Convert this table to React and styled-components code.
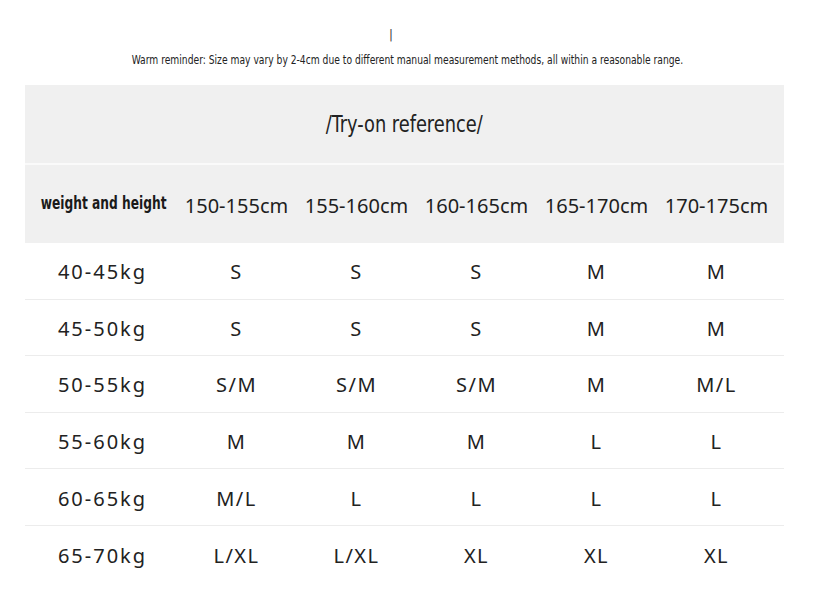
import React from 'react'
import styled, { createGlobalStyle } from 'styled-components'

const GlobalStyle = createGlobalStyle`
  html, body { margin:0; padding:0; background:#fff; }
  body { font-family:"Noto Sans", sans-serif; color:#1c1c1c; }
`

const heights = ['150-155cm', '155-160cm', '160-165cm', '165-170cm', '170-175cm']
const rows = [
  ['40-45kg', 'S', 'S', 'S', 'M', 'M'],
  ['45-50kg', 'S', 'S', 'S', 'M', 'M'],
  ['50-55kg', 'S/M', 'S/M', 'S/M', 'M', 'M/L'],
  ['55-60kg', 'M', 'M', 'M', 'L', 'L'],
  ['60-65kg', 'M/L', 'L', 'L', 'L', 'L'],
  ['65-70kg', 'L/XL', 'L/XL', 'XL', 'XL', 'XL'],
]

function App() {
  return (
    <Page>
      <GlobalStyle />
      <Marker>|</Marker>
      <Reminder>Warm reminder: Size may vary by 2-4cm due to different manual measurement methods, all within a reasonable range.</Reminder>
      <Table>
        <Title><span>/Try-on reference/</span></Title>
        <HeadRow>
          <HeadLabel><span>weight and height</span></HeadLabel>
          {heights.map(h => <HeadCell key={h}>{h}</HeadCell>)}
        </HeadRow>
        {rows.map((r, i) => (
          <Row key={r[0]} last={i === rows.length - 1}>
            <Weight>{r[0]}</Weight>
            {r.slice(1).map((s, j) => <Size key={j}>{s}</Size>)}
          </Row>
        ))}
      </Table>
    </Page>
  )
}

const condensed = `"Liberation Sans Narrow","DejaVu Sans Condensed",sans-serif`

const Page = styled.div`
  width:814px;
  height:611px;
  padding-top:27px;
  box-sizing:border-box;
  display:flex;
  flex-direction:column;
  align-items:center;
`

const Marker = styled.div`
  font-family:${condensed};
  font-size:13px;
  line-height:16px;
  color:#3a3a3a;
  margin-left:-32px;
`

const Reminder = styled.div`
  font-family:${condensed};
  font-size:12px;
  line-height:16px;
  margin-top:9px;
  color:#222;
  white-space:nowrap;
  transform:scaleX(0.85);
`

const Table = styled.div`
  width:759px;
  margin-top:17px;
  margin-left:-6px;
  display:flex;
  flex-direction:column;
`

const Title = styled.div`
  height:78px;
  background:#f0f0f0;
  border-bottom:2px solid #fafafa;
  display:flex;
  align-items:center;
  justify-content:center;
  font-family:${condensed};
  font-size:23px;
  color:#222;
  span { display:inline-block; transform:scaleX(0.86); }
`

const grid = `
  display:grid;
  grid-template-columns:152px repeat(5, 120px) 1fr;
  align-items:center;
`

const HeadRow = styled.div`
  ${grid}
  height:78px;
  background:#f0f0f0;
`

const HeadLabel = styled.div`
  font-family:${condensed};
  font-size:17px;
  font-weight:bold;
  color:#1a1a1a;
  text-align:center;
  white-space:nowrap;
  margin-top:-2px;
  padding-right:4px;
  span { display:inline-block; transform:scaleX(0.8); }
`

const HeadCell = styled.div`
  font-size:20px;
  color:#1e1e1e;
  text-align:center;
  margin-top:2px;
`

const Row = styled.div`
  ${grid}
  box-sizing:border-box;
  height:56.6px;
  padding-top:2px;
  border-bottom:${p => (p.last ? 'none' : '1.5px solid #ececec')};
`

const Weight = styled.div`
  font-size:20px;
  letter-spacing:2px;
  color:#222;
  text-align:center;
  padding-left:4px;
`

const Size = styled.div`
  font-size:20px;
  letter-spacing:1.5px;
  color:#222;
  text-align:center;
`

export default App
